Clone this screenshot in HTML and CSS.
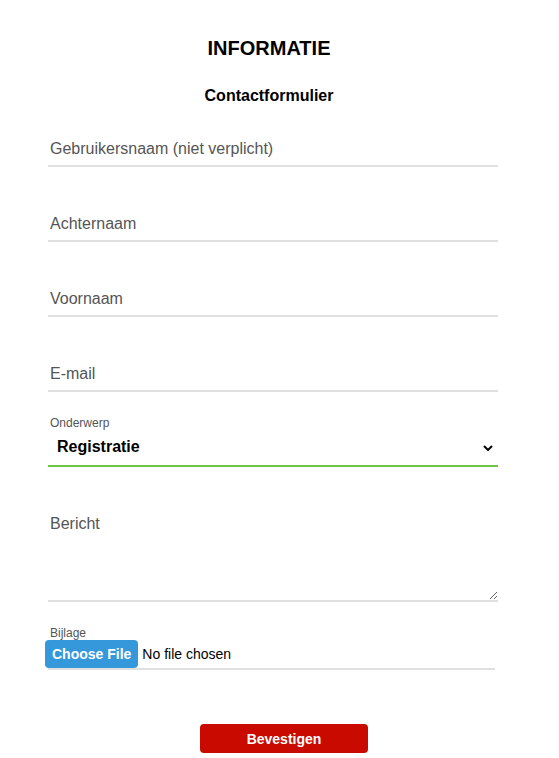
FILE: index.html
```html
<!DOCTYPE html>
<html lang="nl">
<head>
  <meta charset="UTF-8" />
  <meta name="viewport" content="width=device-width, initial-scale=1.0"/>
  <title>Informatie - Contactformulier</title>
  <link rel="stylesheet" href="styles.css">
</head>
<body>
  <div class="page">
    <h1>INFORMATIE</h1>
    <h2>Contactformulier</h2>

    <form class="contact-form">
      <input class="field" type="text" name="gebruikersnaam" placeholder="Gebruikersnaam (niet verplicht)">
      <input class="field" type="text" name="achternaam" placeholder="Achternaam">
      <input class="field" type="text" name="voornaam" placeholder="Voornaam">
      <input class="field" type="email" name="email" placeholder="E-mail">

      <div class="group">
        <label class="small-label" for="onderwerp">Onderwerp</label>
        <div class="select-wrap">
          <select id="onderwerp" name="onderwerp">
            <option>Registratie</option>
            <option>Account</option>
            <option>Betaling</option>
            <option>Overig</option>
          </select>
          <svg class="chevron" width="10" height="6" viewBox="0 0 10 6">
            <path d="M1 1 L5 5 L9 1" fill="none" stroke="#000" stroke-width="2"/>
          </svg>
        </div>
      </div>

      <textarea class="field message" name="bericht" placeholder="Bericht"></textarea>

      <div class="group">
        <label class="small-label" for="bijlage">Bijlage</label>
        <div class="file-wrap">
          <input id="bijlage" type="file" name="bijlage">
        </div>
      </div>

      <div class="actions">
        <button type="submit" class="btn-submit">Bevestigen</button>
      </div>
    </form>
  </div>
</body>
</html>
```

FILE: styles.css
```css
* { box-sizing: border-box; }
body {
  margin: 0;
  font-family: 'Liberation Sans', Arial, sans-serif;
  background: #fff;
  color: #000;
}
.page {
  width: 538px;
  padding-top: 36px;
}
h1 {
  margin: 0;
  font-size: 20px;
  line-height: 24px;
  text-align: center;
}
h2 {
  margin: 26px 0 0;
  font-size: 16px;
  line-height: 20px;
  text-align: center;
}
.contact-form {
  margin: 25px 0 0 48px;
  width: 450px;
  display: flex;
  flex-direction: column;
}
.field {
  display: block;
  width: 100%;
  font-family: inherit;
  font-size: 16px;
  line-height: 20px;
  padding: 8px 2px 6px;
  border: none;
  border-bottom: 2px solid #e0e0e0;
  outline: none;
  color: #000;
  background: transparent;
}
.field + .field,
.group + .field {
  margin-top: 39px;
}
.field::placeholder {
  color: #555;
}
.message {
  height: 96px;
  resize: both;
}
.group {
  margin-top: 24px;
}
.small-label {
  display: block;
  font-size: 12px;
  line-height: 14px;
  color: #555;
  padding-left: 2px;
}
.select-wrap {
  position: relative;
}
.select-wrap select {
  display: block;
  width: 100%;
  -webkit-appearance: none;
  appearance: none;
  font-family: inherit;
  font-size: 16px;
  font-weight: bold;
  line-height: 20px;
  padding: 7px 30px 8px 9px;
  border: none;
  border-bottom: 2px solid #6cc644;
  border-radius: 0;
  background: transparent;
  color: #000;
  outline: none;
}
.chevron {
  position: absolute;
  right: 5px;
  top: 15px;
  pointer-events: none;
}
.file-wrap {
  width: 447px;
  border-bottom: 2px solid #e0e0e0;
  height: 30px;
}
.file-wrap input {
  margin: 0 0 0 -3px;
  font-family: inherit;
  font-size: 14px;
  line-height: 28px;
  color: #000;
}
.file-wrap input::file-selector-button {
  height: 28px;
  margin: 0 4px 0 0;
  padding: 0 7px;
  border: none;
  border-radius: 4px;
  background: #3498db;
  color: #fff;
  font-family: inherit;
  font-size: 14px;
  font-weight: bold;
  cursor: pointer;
}
.actions {
  margin-top: 54px;
  padding-left: 152px;
}
.btn-submit {
  width: 168px;
  height: 29px;
  border: none;
  border-radius: 4px;
  background: #c80a00;
  color: #fff;
  font-family: inherit;
  font-size: 14px;
  font-weight: bold;
  cursor: pointer;
}
```
